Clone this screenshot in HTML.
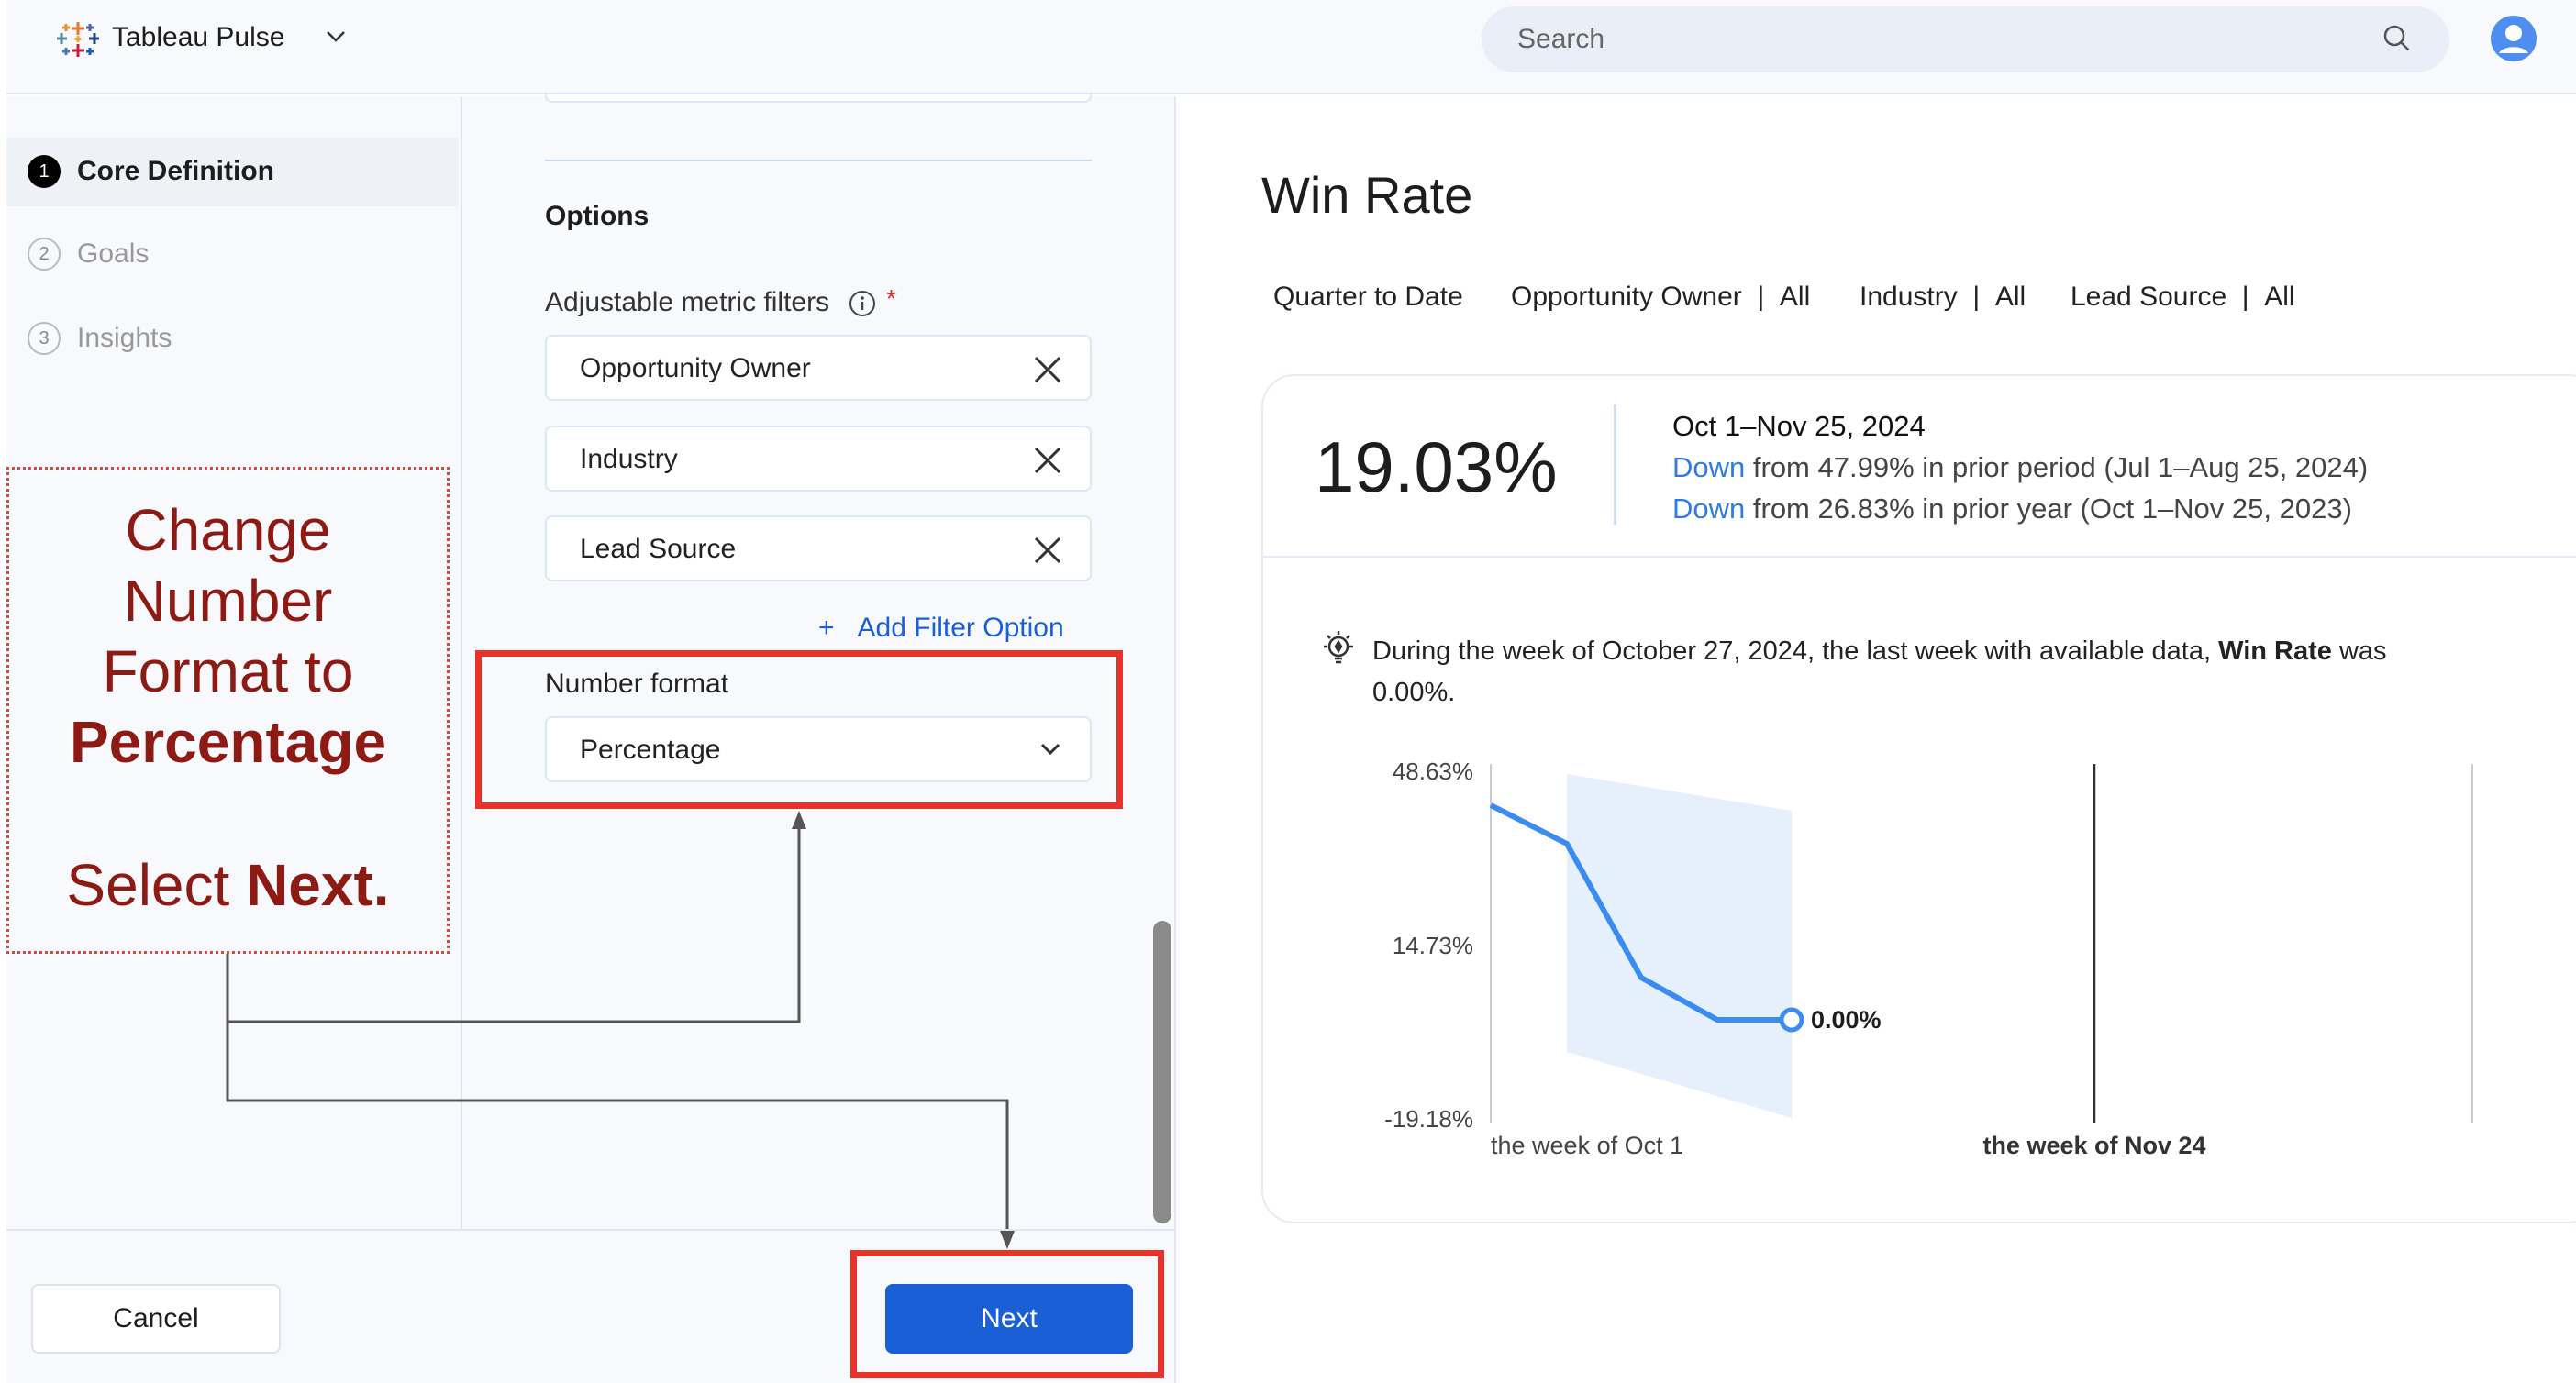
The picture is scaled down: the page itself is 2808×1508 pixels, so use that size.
<!DOCTYPE html>
<html><head><meta charset="utf-8"><style>
*{box-sizing:border-box;margin:0;padding:0}
body{width:2808px;height:1508px;position:relative;overflow:hidden;background:#fff;font-family:"Liberation Sans",sans-serif;color:#1d1d1f}
.a{position:absolute;white-space:nowrap}
.inp{position:absolute;left:594px;width:596px;height:72px;background:#fff;border:2px solid #dde6f5;border-radius:8px}
.inp span{position:absolute;left:36px;top:18px;font-size:30px;color:#222}
.x{position:absolute;right:30px;top:20px}
.f{position:absolute;top:307px;font-size:30px;color:#222;white-space:nowrap}
</style></head><body>
<div class="a" style="left:7px;top:105px;width:1275px;height:1403px;background:#f7f9fd"></div>
<div class="inp" style="top:40px;height:72px"></div>
<div class="a" style="left:7px;top:0;width:2801px;height:103px;background:#f7f9fd;border-bottom:2px solid #dbe5f5"></div>
<svg class="a" style="left:62px;top:20px" width="46" height="46" viewBox="0 0 46 46">
<g stroke-width="3"><path d="M23 4v14M16 11h14" stroke="#e8762d"/><path d="M23 28v14M16 35h14" stroke="#c72037"/><path d="M5 16v12M-1 22h12" stroke="#59879b"/><path d="M41 16v12M35 22h12" stroke="#1f457e"/><path d="M10 6v8M6 10h8" stroke="#eb912b"/><path d="M36 6v8M32 10h8" stroke="#5b6591"/><path d="M10 32v8M6 36h8" stroke="#4e79a7"/><path d="M36 32v8M32 36h8" stroke="#1f5ea8"/><path d="M23 19v7M19.5 22.5h7" stroke="#f0a43a"/></g></svg>
<div class="a" style="left:122px;top:24px;font-size:30px">Tableau Pulse</div>
<svg class="a" style="left:354px;top:32px" width="24" height="16"><path d="M3 3l9 9 9-9" fill="none" stroke="#333" stroke-width="2.5"/></svg>
<div class="a" style="left:1615px;top:7px;width:1055px;height:72px;background:#e9eef7;border-radius:36px"></div>
<div class="a" style="left:1654px;top:26px;font-size:30px;color:#666">Search</div>
<svg class="a" style="left:2597px;top:26px" width="32" height="32"><circle cx="13" cy="13" r="10" fill="none" stroke="#555" stroke-width="2.5"/><path d="M20.5 20.5l8 8" stroke="#555" stroke-width="2.5"/></svg>
<svg class="a" style="left:2714px;top:16px" width="52" height="52"><circle cx="26" cy="26" r="25" fill="#4d8ef0"/><circle cx="26" cy="20" r="9" fill="#fff"/><path d="M10 42c4-9 28-9 32 0" fill="#fff"/></svg>
<div class="a" style="left:7px;top:150px;width:493px;height:75px;background:#eef1f6"></div>
<div class="a" style="left:502px;top:105px;width:2px;height:1236px;background:#dfe6f2"></div>
<div class="a" style="left:1280px;top:105px;width:2px;height:1403px;background:#dfe6f2"></div>
<div class="a" style="left:30px;top:169px;width:36px;height:36px;border-radius:50%;background:#000;color:#fff;font-size:20px;text-align:center;line-height:36px">1</div>
<div class="a" style="left:84px;top:170px;font-size:30px;font-weight:bold">Core Definition</div>
<div class="a" style="left:30px;top:259px;width:36px;height:36px;border-radius:50%;border:2px solid #bbb;color:#888;font-size:20px;text-align:center;line-height:32px">2</div>
<div class="a" style="left:84px;top:260px;font-size:30px;color:#999">Goals</div>
<div class="a" style="left:30px;top:351px;width:36px;height:36px;border-radius:50%;border:2px solid #bbb;color:#888;font-size:20px;text-align:center;line-height:32px">3</div>
<div class="a" style="left:84px;top:352px;font-size:30px;color:#999">Insights</div>
<div class="a" style="left:7px;top:509px;width:483px;height:531px;border:3px dotted #e0463a"></div>
<div class="a" style="left:7px;top:540px;width:483px;text-align:center;font-size:64px;line-height:77px;color:#8e1a14;white-space:normal">Change<br>Number<br>Format to<br><b>Percentage</b></div>
<div class="a" style="left:7px;top:928px;width:483px;text-align:center;font-size:64px;color:#8e1a14">Select <b>Next.</b></div>
<div class="a" style="left:594px;top:174px;width:596px;height:2px;background:#cddbf1"></div>
<div class="a" style="left:594px;top:219px;font-size:30px;font-weight:bold">Options</div>
<div class="a" style="left:594px;top:313px;font-size:30px;color:#333">Adjustable metric filters</div>
<svg class="a" style="left:925px;top:316px" width="30" height="30"><circle cx="15" cy="15" r="13" fill="none" stroke="#444" stroke-width="2"/><path d="M15 13v9" stroke="#444" stroke-width="2.5"/><circle cx="15" cy="9" r="1.8" fill="#444"/></svg>
<div class="a" style="left:966px;top:310px;font-size:28px;color:#d3302a">*</div>
<div class="inp" style="top:365px"><span>Opportunity Owner</span><svg class="x" width="32" height="32"><path d="M3 3l26 26M29 3L3 29" stroke="#333" stroke-width="3"/></svg></div>
<div class="inp" style="top:464px"><span>Industry</span><svg class="x" width="32" height="32"><path d="M3 3l26 26M29 3L3 29" stroke="#333" stroke-width="3"/></svg></div>
<div class="inp" style="top:562px"><span>Lead Source</span><svg class="x" width="32" height="32"><path d="M3 3l26 26M29 3L3 29" stroke="#333" stroke-width="3"/></svg></div>
<div class="a" style="left:892px;top:668px;font-size:30px;color:#1a5fd6">+&nbsp;&nbsp;&nbsp;Add Filter Option</div>
<div class="a" style="left:594px;top:729px;font-size:30px;color:#222">Number format</div>
<div class="inp" style="top:781px"><span>Percentage</span><svg class="x" style="top:24px" width="26" height="20"><path d="M4 5l9 9 9-9" fill="none" stroke="#333" stroke-width="3"/></svg></div>
<div class="a" style="left:518px;top:709px;width:706px;height:173px;border:7px solid #e8322a"></div>
<div class="a" style="left:1257px;top:1004px;width:20px;height:330px;border-radius:10px;background:#8a8a8a"></div>
<svg class="a" style="left:0;top:0" width="1300" height="1508"><g fill="none" stroke="#555" stroke-width="3"><path d="M248 1040V1114H871V892"/><path d="M248 1114V1200H1098V1352"/></g><path d="M871 884l-8 20h16z" fill="#555"/><path d="M1098 1362l-8-20h16z" fill="#555"/></svg>
<div class="a" style="left:7px;top:1340px;width:1273px;height:2px;background:#dfe6f2"></div>
<div class="a" style="left:34px;top:1400px;width:272px;height:76px;border:2px solid #dde3ec;border-radius:8px;background:#fff;font-size:30px;text-align:center;line-height:72px">Cancel</div>
<div class="a" style="left:965px;top:1400px;width:270px;height:76px;border-radius:8px;background:#1a5fd6;color:#fff;font-size:30px;text-align:center;line-height:76px">Next</div>
<div class="a" style="left:927px;top:1363px;width:342px;height:140px;border:7px solid #e8322a"></div>
<div class="a" style="left:1375px;top:180px;font-size:56px">Win Rate</div>
<div class="f" style="left:1388px">Quarter to Date</div>
<div class="f" style="left:1647px">Opportunity Owner &nbsp;| &nbsp;All</div>
<div class="f" style="left:2027px">Industry &nbsp;| &nbsp;All</div>
<div class="f" style="left:2257px">Lead Source &nbsp;| &nbsp;All</div>
<div class="a" style="left:1375px;top:408px;width:1460px;height:926px;border:2px solid #e6ecf6;border-radius:36px"></div>
<div class="a" style="left:1375px;top:606px;width:1433px;height:2px;background:#e6ecf6"></div>
<div class="a" style="left:1433px;top:464px;font-size:78px">19.03%</div>
<div class="a" style="left:1759px;top:441px;width:3px;height:131px;background:#cfdff3"></div>
<div class="a" style="left:1823px;top:442px;font-size:31px;line-height:45px;color:#444">
<span style="color:#111">Oct 1–Nov 25, 2024</span><br><span style="color:#2f7be0">Down</span> from 47.99% in prior period (Jul 1–Aug 25, 2024)<br><span style="color:#2f7be0">Down</span> from 26.83% in prior year (Oct 1–Nov 25, 2023)</div>
<svg class="a" style="left:1438px;top:686px" width="42" height="42"><g fill="none" stroke="#333" stroke-width="2.5"><circle cx="21" cy="19" r="10"/><path d="M17 32h8M18 36h6M21 2v4M5 19h4M33 19h4M9 7l3 3M33 7l-3 3"/><path d="M21 14l3 5-3 5-3-5z" fill="#333"/></g></svg>
<div class="a" style="left:1496px;top:688px;font-size:29px;line-height:45px;color:#222">During the week of October 27, 2024, the last week with available data, <b>Win Rate</b> was<br>0.00%.</div>
<div class="a" style="left:1490px;top:826px;width:116px;text-align:right;font-size:26px;color:#444">48.63%</div>
<div class="a" style="left:1490px;top:1016px;width:116px;text-align:right;font-size:26px;color:#444">14.73%</div>
<div class="a" style="left:1490px;top:1205px;width:116px;text-align:right;font-size:26px;color:#444">-19.18%</div>
<svg class="a" style="left:0;top:0" width="2808" height="1508">
<path d="M1708 844L1953 884V1219L1708 1147z" fill="#e6f0fd"/>
<path d="M1625 833V1224" stroke="#ccc" stroke-width="2"/>
<path d="M2283 833V1224" stroke="#333" stroke-width="2.5"/>
<path d="M2695 833V1224" stroke="#ccc" stroke-width="2"/>
<path d="M1625 878L1708 920L1789 1066L1872 1112H1953" fill="none" stroke="#3b8cf0" stroke-width="6" stroke-linejoin="round"/>
<circle cx="1953" cy="1112" r="11" fill="#fff" stroke="#3b8cf0" stroke-width="5"/>
</svg>
<div class="a" style="left:1974px;top:1097px;font-size:27px;font-weight:bold">0.00%</div>
<div class="a" style="left:1625px;top:1234px;font-size:27px;color:#444">the week of Oct 1</div>
<div class="a" style="left:2160px;top:1234px;width:246px;text-align:center;font-size:27px;font-weight:bold;color:#333">the week of Nov 24</div>
</body></html>
